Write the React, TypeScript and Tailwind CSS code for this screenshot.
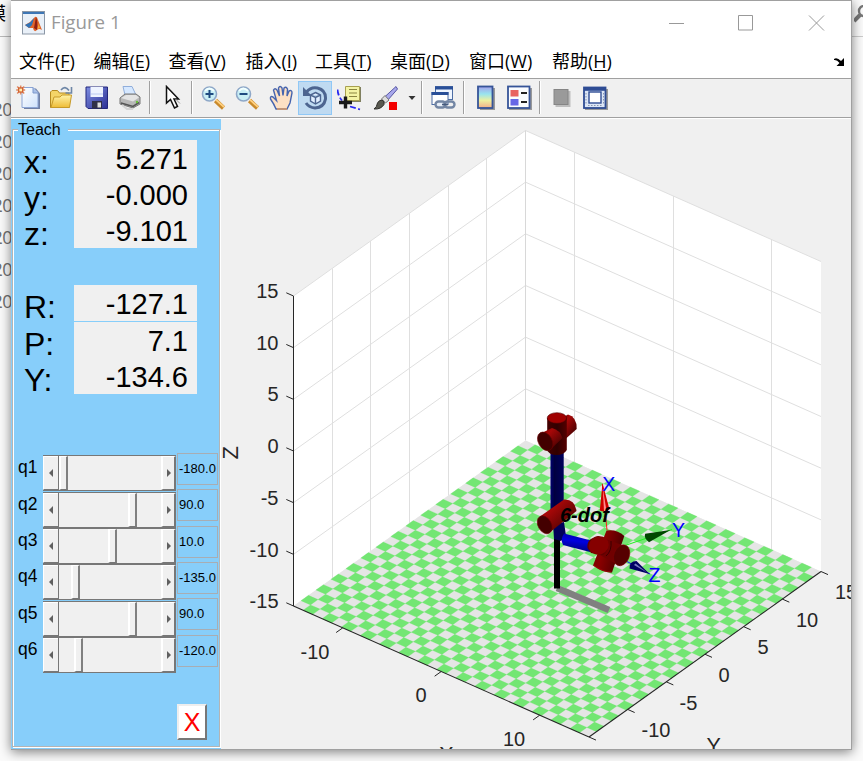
import React from "react";

type P = [number, number];
const BACK: P = [525.5, 440.5];
const LEFT: P = [293.5, 606];
const U: P = [295.5, 131];
const V: P = [232, -165.5];
const H = 310;

const floor = (a: number, b: number): P => [
  LEFT[0] + U[0] * a + V[0] * b,
  LEFT[1] + U[1] * a + V[1] * b,
];
const pts = (...p: P[]) => p.map((q) => q[0].toFixed(2) + "," + q[1].toFixed(2)).join(" ");
const up = (p: P, h: number): P => [p[0], p[1] - h];

const N = 31;
function tiles() {
  let d = "";
  for (let i = 0; i < N; i++)
    for (let j = 0; j < N; j++)
      if ((i + j) % 2 === 1) {
        const q = [floor(i / N, j / N), floor((i + 1) / N, j / N), floor((i + 1) / N, (j + 1) / N), floor(i / N, (j + 1) / N)];
        d += "M" + q.map((c) => c[0].toFixed(2) + " " + c[1].toFixed(2)).join("L") + "Z";
      }
  return d;
}

function Line({ a, b, c = "#dfdfdf", w = 1 }: { a: P; b: P; c?: string; w?: number }) {
  return <line x1={a[0]} y1={a[1]} x2={b[0]} y2={b[1]} stroke={c} strokeWidth={w} />;
}

const yTicks: [string, number, number][] = [
  ["-10", 641.5, 737], ["-5", 679.5, 709.5], ["0", 718.5, 682], ["5", 757.5, 654], ["10", 796, 627], ["15", 835, 599],
];
const xTicks: [string, number, number][] = [["-10", 300.5, 659], ["0", 415.5, 702], ["10", 503, 746]];
const zTicks = ["15", "10", "5", "0", "-5", "-10", "-15"];

function Plot() {
  const right = floor(1, 1);
  const front = floor(1, 0);
  const ink = "#262626";
  return (
    <svg className="block h-[630px] w-[630px] shrink-0" viewBox="221 119 630 630" fontFamily="'Liberation Sans', Arial, sans-serif">
      <defs>
        <linearGradient id="redAcross" x1="0" y1="0" x2="1" y2="1">
          <stop offset="0" stopColor="#6d0000" /><stop offset="0.3" stopColor="#a80808" /><stop offset="1" stopColor="#2c0000" />
        </linearGradient>
        <linearGradient id="redBody" x1="0" y1="0" x2="1" y2="0">
          <stop offset="0" stopColor="#450000" /><stop offset="0.5" stopColor="#300000" /><stop offset="1" stopColor="#550000" />
        </linearGradient>
        <linearGradient id="wrist" x1="0" y1="0" x2="1" y2="0.3">
          <stop offset="0" stopColor="#720000" /><stop offset="0.4" stopColor="#8a0000" /><stop offset="1" stopColor="#4a0000" />
        </linearGradient>
        <linearGradient id="upperArm" x1="0" y1="0" x2="1" y2="0">
          <stop offset="0" stopColor="#000070" /><stop offset="0.3" stopColor="#000040" /><stop offset="1" stopColor="#00005c" />
        </linearGradient>
        <linearGradient id="foreArm" x1="0.3" y1="0" x2="0.1" y2="1">
          <stop offset="0" stopColor="#0000b0" /><stop offset="0.35" stopColor="#0000e0" /><stop offset="1" stopColor="#000068" />
        </linearGradient>
      </defs>
      <polygon points={pts(LEFT, up(LEFT, H), up(BACK, H), up(right, H), right, BACK)} fill="#fff" />
      {[1, 2, 3, 4, 5, 6].map((k) => (
        <g key={k}>
          <Line a={up(LEFT, (H * k) / 6)} b={up(BACK, (H * k) / 6)} />
          <Line a={up(BACK, (H * k) / 6)} b={up(right, (H * k) / 6)} />
        </g>
      ))}
      {[1, 2, 3, 4, 5].map((k) => {
        const p = floor(0, k / 6);
        const x: P = [Math.floor(p[0]) + 0.5, p[1]];
        return <Line key={k} a={x} b={up(x, H)} />;
      })}
      {[1, 3, 5].map((k) => {
        const p = floor(k / 6, 1);
        const x: P = [Math.floor(p[0]) + 0.5, p[1]];
        return <Line key={k} a={x} b={up(x, H)} />;
      })}
      <Line a={BACK} b={up(BACK, H)} c="#d8d8d8" />
      <polygon points={pts(LEFT, BACK, right, front)} fill="#e5e5e5" />
      <path d={tiles()} fill="#73e673" stroke="#73e673" strokeWidth="0.25" />
      <Line a={LEFT} b={up(LEFT, H)} c={ink} />
      <Line a={LEFT} b={front} c={ink} w={1.1} />
      <Line a={front} b={right} c={ink} w={1.1} />
      {zTicks.map((t, k) => {
        const p = up(LEFT, H - (H * k) / 6);
        return (
          <g key={t}>
            <Line a={p} b={[p[0] - 7.2, p[1] - 3.2]} c={ink} />
            <text x="278.5" y={298 + k * 51.7} fontSize="20" textAnchor="end" fill={ink}>{t}</text>
          </g>
        );
      })}
      {[1, 3, 5].map((k) => {
        const p = floor(k / 6, 0);
        return <Line key={k} a={p} b={[p[0] - 6.6, p[1] + 4.7]} c={ink} />;
      })}
      {[0, 1, 2, 3, 4, 5, 6].map((k) => {
        const p = floor(1, k / 6);
        return <Line key={k} a={p} b={[p[0] + 7, p[1] + 3.1]} c={ink} />;
      })}
      {[...yTicks, ...xTicks].map(([t, x, y], i) => (
        <text key={i} x={x} y={y} fontSize="20" fill={ink}>{t}</text>
      ))}
      <text x="706.5" y="752.5" fontSize="21.5" fill={ink}>Y</text>
      <text x="439" y="762" fontSize="22" fill={ink}>X</text>
      <text transform="translate(237.5 459.5) rotate(-90)" fontSize="22" fill={ink}>Z</text>

      <path d="M557 588L609 610" stroke="#808080" strokeWidth="6.5" />
      <rect x="554" y="536" width="6" height="52.5" fill="#000" />
      <path d="M553 524L564 522L566 536L561 541L554 539Z" fill="#00005a" />
      <rect x="550.5" y="448" width="13.2" height="66" fill="url(#upperArm)" />
      <path d="M564 533.5L593 541L590 552L563 545Q560 539 564 533.5Z" fill="url(#foreArm)" />

      <path d="M562 418L568 414.5Q577 417 576.7 429L566 438.5Z" fill="url(#redAcross)" />
      <path d="M547.2 418V450Q549 455 556.5 455T566.8 450V418Z" fill="url(#redBody)" />
      <ellipse cx="556.9" cy="418" rx="9.7" ry="5.3" fill="#a00000" stroke="#4c0000" strokeWidth="0.6" />
      <path d="M540.5 433.5L552 428Q560 430 562.5 438L550 450Z" fill="url(#redAcross)" />
      <ellipse cx="545.2" cy="441.4" rx="6.8" ry="10" transform="rotate(-30 545.2 441.4)" fill="#420000" stroke="#6b0000" strokeWidth="0.6" />

      <path d="M540 516.5L564 499.5Q575 499 576.5 511L549 533Z" fill="url(#redAcross)" />
      <ellipse cx="544.7" cy="524.8" rx="6.6" ry="9.6" transform="rotate(-30 544.7 524.8)" fill="#440000" stroke="#6b0000" strokeWidth="0.6" />

      <path d="M607 530L602.3 484" stroke="#ff1a1a" />
      <path d="M602.5 483L599.8 510.5Q605 513 609.5 509.5Z" fill="#d00000" />
      <path d="M602.8 488L604 511L606.5 511Z" fill="#ff8c8c" />
      <path d="M626 545.2L672 529.5" stroke="#20f520" />
      <path d="M670.5 530L645.2 533.8Q643.5 538 649 542.2Z" fill="#004800" />
      <path d="M627 561.5L650 574" stroke="#1414ff" />
      <path d="M649.5 574L636.5 561Q629 561 629.5 568.5Z" fill="#000064" />
      <path d="M647 572.5L635.5 563.5L634 565Z" fill="#7a7ac4" />
      <text x="560" y="521.5" fontSize="20" fontWeight="bold" fontStyle="italic" fill="#000">6-dof</text>

      <path d="M606.5 530.5Q617 529 624.3 536L612 572.5Q603 573 593 565.5Z" fill="url(#wrist)" />
      <path d="M594 565.5Q603 572 611.5 572" stroke="#a00808" strokeWidth="0.8" fill="none" />
      <path d="M598 536L624.5 546L620 566L598 554Z" fill="#700000" />
      <path d="M606 556Q612 551 611 541" stroke="#3a0000" fill="none" />
      <ellipse cx="621.6" cy="555.3" rx="7.7" ry="10.8" transform="rotate(22 621.6 555.3)" fill="#560000" stroke="#790000" strokeWidth="0.6" />
      <path d="M598 536Q586 539 587.5 548L591 553L603 555Q609 551 608.5 542Z" fill="#600000" />
      <ellipse cx="598.8" cy="545.4" rx="10.2" ry="9" transform="rotate(-22 598.8 545.4)" fill="#850000" />
      <g fontSize="19.5" fill="#00f">
        <text x="602.3" y="490.7">X</text>
        <text x="672" y="536.7">Y</text>
        <text x="648.5" y="581.7">Z</text>
      </g>
    </svg>
  );
}

function Icon({ ml, w = 25, children, label }: { ml: string; w?: number; children: React.ReactNode; label: string }) {
  return (
    <svg aria-label={label} className={"h-[26px] shrink-0 " + ml} width={w} viewBox={`0 0 ${w} 26`} fill="none">
      {children}
    </svg>
  );
}
const Sep = ({ ml }: { ml: string }) => <div className={"h-[33px] w-[2px] shrink-0 border-r border-l border-r-white border-l-[#a0a0a0] " + ml} />;

function Lens({ plus }: { plus?: boolean }) {
  return (
    <>
      <path d="M14.5 15.5L22.5 23" stroke="#c98a2c" strokeWidth="4.5" />
      <path d="M14.8 14.6L23 22" stroke="#ffd080" strokeWidth="1.8" />
      <circle cx="8.5" cy="9" r="7" fill="#c8eef5" stroke="#8fa8c8" strokeWidth="1.6" />
      <path d="M4 6Q8 1 13 6" stroke="#f2ffff" strokeWidth="2" />
      <path d={plus ? "M4.5 9H12.5M8.5 5V13" : "M4.5 9H12.5"} stroke="#1d4a80" strokeWidth="2" />
    </>
  );
}

function Toolbar() {
  return (
    <div className="flex h-[38px] shrink-0 items-center bg-[#f0f0f0] pb-px">
      <svg width="0" height="0" className="absolute">
        <defs>
          <linearGradient id="paper" x1="0" y1="0" x2="1" y2="1"><stop offset="0" stopColor="#fff" /><stop offset="1" stopColor="#cfe2fb" /></linearGradient>
          <linearGradient id="gold" x1="0" y1="0" x2="0" y2="1"><stop offset="0" stopColor="#fff3a8" /><stop offset="1" stopColor="#eebc36" /></linearGradient>
          <linearGradient id="disk" x1="0" y1="0" x2="1" y2="1"><stop offset="0" stopColor="#7f8fe2" /><stop offset="1" stopColor="#2b2f94" /></linearGradient>
          <linearGradient id="jet" x1="0" y1="0" x2="0" y2="1"><stop offset="0" stopColor="#a4a0ec" /><stop offset="0.35" stopColor="#98e4ee" /><stop offset="0.65" stopColor="#eef0a0" /><stop offset="1" stopColor="#f4ae88" /></linearGradient>
        </defs>
      </svg>
      <Icon ml="ml-[5px]" label="New figure">
        <path d="M8 3.5H20L24 8.5V24H8Z" fill="#7080a4" />
        <path d="M6 2.5H17L22 7.5V22.5H6Z" fill="url(#paper)" stroke="#8ba4d4" />
        <path d="M17 2.5V8H22" fill="#a9c0e8" stroke="#7d98cc" />
        <path d="M4.7 .5V9.5M.2 5H9.2M1.2 1.5L8.2 8.5M8.2 1.5L1.2 8.5" stroke="#e08a62" strokeWidth="1.5" />
        <rect x="2.7" y="3" width="4" height="4" fill="#fff0b0" stroke="#d05a2c" strokeWidth="1.2" />
      </Icon>
      <Icon ml="ml-[8px]" label="Open">
        <path d="M1.5 22.5V7L3 5.5H8.5L10.5 8H20V22.5Z" fill="#f4d468" stroke="#b58a20" />
        <path d="M2 22.5L5 12H11L13 10H22.5L20.5 22.5Z" fill="url(#gold)" stroke="#c79a28" />
        <path d="M12 5Q16 0 20 5.5M22.5 2V8H16.5" stroke="#6e86a6" strokeWidth="1.6" />
      </Icon>
      <Icon ml="ml-[11px]" w={24} label="Save">
        <path d="M1 2H22.5V23.5H3L1 21.5Z" fill="url(#disk)" stroke="#23277c" />
        <rect x="5.5" y="2" width="12.5" height="10" fill="#eef3ff" />
        <path d="M6 9H18" stroke="#bccaf0" />
        <rect x="7" y="16" width="10" height="7.5" fill="#303048" />
        <rect x="12.5" y="17.5" width="3.5" height="5" fill="#dedede" />
      </Icon>
      <Icon ml="ml-[9px]" w={24} label="Print">
        <path d="M5 1.5H14L18 10H7Z" fill="#d6e8ff" stroke="#90aedb" />
        <path d="M2 13L7 9H18L22 12V19L15 23L2 19Z" fill="#b8b8b8" stroke="#777" />
        <path d="M3 13L8 10H18L21 12.5L15 16.5Z" fill="#e4e4e4" />
        <path d="M3 18L15 21.5L21 17.5" stroke="#555" strokeWidth="1.6" />
        <path d="M4 20L9 24H15" stroke="#d4d4d4" strokeWidth="2" />
        <circle cx="19" cy="17" r="1.2" fill="#68c038" />
      </Icon>
      <Sep ml="ml-[7px]" />
      <Icon ml="ml-[14px]" w={18} label="Edit plot">
        <path d="M1.5 1.5V18L5.5 14.5L9.5 23L12.5 21.5L9 14H13.5Z" fill="#fff" stroke="#111" strokeWidth="1.5" />
        <path d="M10.5 14L15 18.5" stroke="#999" />
      </Icon>
      <Sep ml="ml-[8px]" />
      <Icon ml="ml-[8px]" label="Zoom in"><Lens plus /></Icon>
      <Icon ml="ml-[9px]" label="Zoom out"><Lens /></Icon>
      <Icon ml="ml-[9px]" label="Pan">
        <path d="M7 24Q5 19 1.5 14Q1 10.5 4 12L7.5 15.5L4.5 5Q6 2.5 8 5L10.5 11L9.5 3Q11 0 13 3L14 10.5L15 3Q17 1 18.5 4L18 11L20 6Q23 4.5 23 8L21 18L18 24Z" fill="#fde0c4" stroke="#4664ae" strokeWidth="1.4" />
        <path d="M8 24H18" stroke="#d69a6a" strokeWidth="1.6" />
      </Icon>
      <div className="ml-[4px] flex h-[34px] w-[34px] shrink-0 items-center justify-center border border-[#90c8f6] bg-[#bfdaf1]">
        <Icon ml="ml-0" w={26} label="Rotate 3D">
          <path d="M4.5 7Q9 1.5 15.5 3Q24 5 23.5 14Q22 22.5 13 23Q7 22.5 4 18" stroke="#4d6590" strokeWidth="3" />
          <path d="M1 2V11H10Z" fill="#4d6590" />
          <path d="M13.5 7.5L18.5 10V16L13.5 19L8.5 16V10ZM8.5 10L13.5 12.5L18.5 10M13.5 12.5V19" fill="#e2efff" stroke="#4d6590" strokeWidth="1.4" />
        </Icon>
      </div>
      <Icon ml="ml-[5px]" label="Data cursor">
        <path d="M.5 4.5Q1 11 5 15.5M13 21.5L23 24.5" stroke="#2828f0" strokeWidth="1.8" strokeDasharray="6 2.5" />
        <path d="M9 2H24V17H9Z" fill="#808060" />
        <path d="M8.5 1.5H22.5V15.5H8.5Z" fill="#f4f4a4" stroke="#a8a050" />
        <path d="M12 4.5H20M12 8H20M12 11.5H20" stroke="#8a8540" />
        <path d="M2 17.5H15M8.5 11.5V23.5" stroke="#1a1a1a" strokeWidth="3.4" />
      </Icon>
      <Icon ml="ml-[11px]" w={26} label="Brush">
        <path d="M23 1.5L24.5 4L14 16L10.5 13Z" fill="#a8a8ec" stroke="#5757a4" />
        <path d="M12 10.5L16 15L12.5 18L8.5 14Z" fill="#ddd" stroke="#777" />
        <path d="M9 15Q12 16 11 19.5Q8 24.5 1 24Q4 22 4.5 18Q6 15 9 15Z" fill="#595950" stroke="#2f2f2b" />
        <rect x="16" y="17" width="8" height="8" fill="#f30000" />
      </Icon>
      <Icon ml="ml-[9px]" w={8} label="Brush options"><path d="M.5 11H7.5L4 15Z" fill="#333" /></Icon>
      <Sep ml="ml-[5px]" />
      <Icon ml="ml-[8px]" label="Link plots">
        <rect x="4.5" y="1.5" width="17" height="13" fill="#eef5ff" stroke="#4d6da4" />
        <path d="M4 3H22" stroke="#294f98" strokeWidth="3" />
        <rect x="1" y="7.5" width="16" height="12" fill="#fff" stroke="#4d6da4" />
        <path d="M.5 8.5H17.5" stroke="#294f98" strokeWidth="3" />
        <rect x="4.5" y="16.5" width="10" height="6" rx="3" stroke="#7386a4" strokeWidth="2.4" fill="#e7eef8" />
        <rect x="13.5" y="16.5" width="10" height="6" rx="3" stroke="#7386a4" strokeWidth="2.4" />
        <path d="M11 19.5H17" stroke="#465b7d" strokeWidth="1.6" />
      </Icon>
      <Sep ml="ml-[7px]" />
      <Icon ml="ml-[12px]" w={18} label="Colorbar">
        <rect x="3" y="3" width="15" height="22" fill="#999" />
        <rect x="1" y="1.5" width="14.5" height="21.5" fill="url(#jet)" stroke="#365498" strokeWidth="1.8" />
      </Icon>
      <Icon ml="ml-[12px]" label="Legend">
        <rect x="2" y="3" width="23" height="22" fill="#999" />
        <rect x="1" y="1.5" width="21.5" height="21.5" fill="#fafcff" stroke="#365498" strokeWidth="1.8" />
        <rect x="3.5" y="5" width="8" height="6.5" fill="#e86262" />
        <rect x="3.5" y="14" width="8" height="6.5" fill="#6666e6" />
        <path d="M14 8H20M14 17H20" stroke="#222" strokeWidth="1.8" />
      </Icon>
      <Sep ml="ml-[7px]" />
      <Icon ml="ml-[12px]" w={18} label="Hide plot tools">
        <rect x="2.5" y="6" width="15" height="16" fill="#bdbdbd" />
        <rect x="1" y="4.5" width="14" height="15" fill="#9a9a9a" stroke="#858585" />
      </Icon>
      <Icon ml="ml-[12px]" label="Show plot tools">
        <rect x="2" y="4" width="23" height="21" fill="#999" />
        <rect x="1" y="2.5" width="21.5" height="20.5" fill="#dce6f6" stroke="#2e4c94" strokeWidth="1.8" />
        <path d="M1 4H22.5" stroke="#2e4c94" strokeWidth="3.6" />
        <rect x="6" y="7" width="12" height="11" fill="#fff" stroke="#2e4c94" strokeWidth="1.4" />
        <path d="M3 8V20M20.5 8V20M5 20.5H19" stroke="#8a96ad" strokeDasharray="1.5 1.5" />
      </Icon>
    </div>
  );
}

const MENU: [string, string, string][] = [
  ["文件", "F", "w-[74.5px]"], ["编辑", "E", "w-[75px]"], ["查看", "V", "w-[77px]"], ["插入", "I", "w-[69.5px]"],
  ["工具", "T", "w-[75px]"], ["桌面", "D", "w-[79px]"], ["窗口", "W", "w-[83px]"], ["帮助", "H", "w-[70px]"],
];

const Reading = ({ name, value, gap = "" }: { name: string; value: string; gap?: string }) => (
  <div className={"flex h-9 w-[184px] text-black " + gap}>
    <span className="w-[50px] pt-[4px] text-[32px] leading-[36px]">{name}</span>
    <span className="h-9 w-[123px] bg-[#f0f0f0] pr-[9px] text-right text-[29px] leading-[38px]">{value}</span>
  </div>
);

const JOINTS: [string, string, string, string, string][] = [
  ["q1", "-180.0", "ml-0", "mt-0", "-mt-[2px]"],
  ["q2", "90.0", "ml-[69px]", "mt-px", "-mt-[3px]"],
  ["q3", "10.0", "ml-[49px]", "mt-0", "-mt-[2px]"],
  ["q4", "-135.0", "ml-[12px]", "mt-0", "-mt-[2px]"],
  ["q5", "90.0", "ml-[69px]", "mt-px", "-mt-[3px]"],
  ["q6", "-120.0", "ml-[15px]", "mt-0", "-mt-[2px]"],
];

function Joint({ j }: { j: [string, string, string, string, string] }) {
  return (
    <div className={"flex h-9 " + j[3]}>
      <span className="w-[25px] text-[17.5px] leading-[24px] text-black">{j[0]}</span>
      <div className="flex h-9 w-[133px] border-t border-b border-[#777] bg-[#f0f0f0]">
        <div className="flex w-[15px] shrink-0 items-center justify-center border-t border-b border-l border-t-white border-b-[#777] border-l-white">
          <svg width="5" height="8" viewBox="0 0 5 8"><path d="M4 0V8L0 4Z" fill="#606060" /></svg>
        </div>
        <div className="w-[103px] shrink-0 border-l border-[#777]">
          <div className={"h-full w-[9px] border-t border-r-2 border-b border-l-2 border-t-white border-r-[#808080] border-b-[#777] border-l-white bg-[#f0f0f0] " + j[2]} />
        </div>
        <div className="flex w-[15px] shrink-0 items-center justify-center border-t border-r-2 border-b border-l-2 border-t-white border-r-[#777] border-b-[#777] border-l-white">
          <svg width="5" height="8" viewBox="0 0 5 8"><path d="M1 0V8L5 4Z" fill="#606060" /></svg>
        </div>
      </div>
      <span className={"ml-px h-[32px] w-[41px] border border-[#a8adb3] pl-px text-[13px] leading-[29px] whitespace-nowrap text-black " + j[4]}>{j[1]}</span>
    </div>
  );
}

function TeachPanel() {
  return (
    <div className="h-[630px] w-[210px] shrink-0 bg-[#87cefa] pt-[10px]">
      <fieldset className="mr-px ml-px h-[618px] border border-[#b4b4b4] shadow-[1px_1px_0_#fff,inset_1px_1px_0_#fff]">
        <div className="-mt-[10px] ml-[5px] w-[50px] bg-[#87cefa] text-base leading-5 text-black">Teach</div>
        <div className="pl-[11px]">
          <Reading name="x:" value="5.271" />
          <Reading name="y:" value="-0.000" />
          <Reading name="z:" value="-9.101" />
          <Reading name="R:" value="-127.1" gap="mt-[37px]" />
          <Reading name="P:" value="7.1" gap="mt-px" />
          <Reading name="Y:" value="-134.6" />
        </div>
        <div className="mt-[61px] pl-[5px]">
          {JOINTS.map((j) => <Joint key={j[0]} j={j} />)}
        </div>
        <div className="mt-[31px] ml-[164px] flex h-9 w-[30px] items-center justify-center border-t-2 border-r-2 border-b-2 border-l-2 border-t-[#eee] border-r-[#777] border-b-[#777] border-l-[#eee] bg-white text-[25px] leading-none text-[#f00]">X</div>
      </fieldset>
    </div>
  );
}

export default function App() {
  return (
    <div className="flex h-[761px] w-[863px] overflow-hidden bg-[#fbfbfb] font-['Liberation_Sans',Arial,sans-serif]">
      <div className="flex h-full w-[11px] shrink-0 flex-col items-end overflow-hidden font-['Open_Sans','Noto_Sans_CJK_SC',sans-serif] text-[#707070]">
        <div className="flex h-[37px] w-full justify-end border-b border-[#bbb] pt-[3px] pr-[5px] text-[18px] leading-5 text-black">模</div>
        <div className="-mr-px pt-[56px]">
          {[0, 1, 2, 3, 4, 5, 6].map((i) => (
            <div key={i} className="h-8 text-right text-[18px] leading-8 tracking-[-0.5px]">20</div>
          ))}
        </div>
      </div>
      <div className="relative flex h-[750px] w-[841px] shrink-0 flex-col border-t border-r border-b border-[#a0a0a0] bg-[#f0f0f0] shadow-[0_2px_11px_rgba(0,0,0,0.5)]">
        <div className="flex h-[43px] shrink-0 items-center bg-white">
          <svg className="ml-[11px]" width="23" height="24" viewBox="0 0 23 24">
            <rect x=".5" y=".5" width="22" height="22.5" fill="#e9f0f8" stroke="#8b97a6" />
            <path d="M1 2H22" stroke="#3d76b5" strokeWidth="2" />
            <path d="M3 14L8 11L13 6Q15 5 16 9L20 19Q17 17 15 19Q12 22 11 17L7 17Z" fill="#e0642a" />
            <path d="M3 14L8 11.5L12 7L10 14L7 17Z" fill="#2f73b8" />
            <path d="M14 6L12 17L15 19Q16 10 14 6Z" fill="#8f1f12" />
            <path d="M15 8L16.5 13L15.5 18L18 17Z" fill="#f6a93a" />
          </svg>
          <span className="ml-[6px] font-['Open_Sans','Noto_Sans',sans-serif] text-[18.7px] text-[#999]">Figure 1</span>
          <svg className="mr-[26px] ml-auto" width="156" height="16" viewBox="0 0 156 16" fill="none" stroke="#999">
            <path d="M0 8.5H15M69.5 .5H83.5V15H69.5ZM140 .5L155 15.5M155 .5L140 15.5" />
          </svg>
        </div>
        <div className="flex h-[35px] shrink-0 items-center border-b border-[#a0a0a0] bg-white pl-2 font-['Open_Sans','Noto_Sans_CJK_SC',sans-serif] text-[18px] text-black">
          {MENU.map(([t, k, w]) => (
            <span key={k} className={"shrink-0 whitespace-nowrap " + w}>
              {t}(<span className="underline underline-offset-2">{k}</span>)
            </span>
          ))}
          <svg className="mr-[6px] ml-auto" width="11" height="9" viewBox="0 0 11 9">
            <path d="M0 2Q3 0 7 4L10 1V9H2.5L5.5 6Q3 2.5 0 3Z" fill="#000" />
          </svg>
        </div>
        <Toolbar />
        <div className="h-[2px] shrink-0 border-t border-b border-t-[#a0a0a0] border-b-white" />
        <div className="flex h-[630px]">
          <TeachPanel />
          <Plot />
        </div>
      </div>
      <div className="h-[37px] w-[11px] shrink-0 border-b border-[#ccc] pt-[5px] pl-[2px]">
        <svg width="9" height="18" viewBox="0 0 9 18" fill="none" stroke="#777">
          <path d="M0 16L6 10" strokeWidth="4" /><circle cx="10" cy="6" r="5" strokeWidth="2.4" />
        </svg>
      </div>
    </div>
  );
}
